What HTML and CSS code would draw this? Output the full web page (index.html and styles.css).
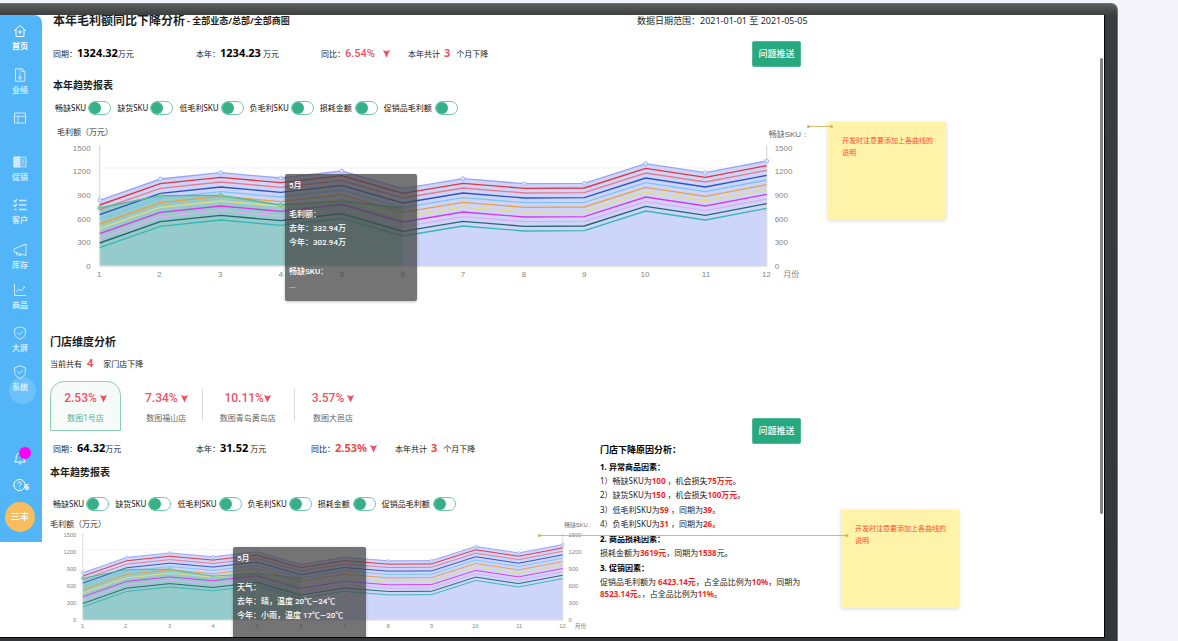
FILE: index.html
```html
<!DOCTYPE html>
<html lang="zh-CN">
<head>
<meta charset="utf-8">
<title>本年毛利额同比下降分析</title>
<link rel="stylesheet" href="styles.css">
</head>
<body>
<svg class="defs" aria-hidden="true">
  <symbol id="drop" viewBox="0 0 8 9"><path d="M0 0.5 L4 2 L8 0.5 L4 9 Z"/></symbol>
  <symbol id="shield" viewBox="0 0 14 14"><path d="M7 .8 L12.3 2.6 V7.5 C12.3 10.2 9.8 12.2 7 13.3 C4.2 12.2 1.7 10.2 1.7 7.5 V2.6 Z M4.4 6.6 L6.5 8.7 L9.8 5.2"/></symbol>
  <defs><path id="curve" d="M149 241 331 177 512 158 692 174 875 153 1058 206 1239 176 1423 191 1603 190 1787 131 1966 158 2150 123"/></defs>
</svg>

<div class="monitor">
<div class="screen">
  <aside class="sidebar">
    <nav class="nav">
      <a class="nav-item current" href="#"><svg class="icon" viewBox="0 0 14 14"><path d="M1 7 L7 1.5 L13 7 M3 5.5 V12.5 H11 V5.5"/><circle cx="7" cy="8" r="1.2"/></svg>首页</a>
      <a class="nav-item" href="#"><svg class="icon" viewBox="0 0 14 14"><path d="M2.5 .8 H9 L11.8 3.6 V13.2 H2.5 Z M9 .8 V3.6 H11.8 M6 2 V3 M7.5 3.5 V4.5 M6 5 V6 M7.5 6.5 V7.5 M6 8.5 H8 V11 H6 Z"/></svg>业绩</a>
      <a class="nav-item" href="#" aria-label="报表"><svg class="icon" viewBox="0 0 14 14"><path d="M1.5 2 H12.5 V12 H1.5 Z M1.5 5.3 H12.5 M5 5.3 V12"/></svg></a>
      <a class="nav-item" href="#"><svg class="icon" viewBox="0 0 14 14"><path d="M1 2.2 H13 V11.8 H1 Z M8.5 5 H11.5 M8.5 7 H11.5 M8.5 9 H11.5"/><path class="solid" d="M1 2 H7 V12 H1 Z"/></svg>促销</a>
      <a class="nav-item" href="#"><svg class="icon" viewBox="0 0 14 14"><path stroke-width="1.4" d="M6 2.5 H13.5 M6 7 H13.5 M6 11.5 H13.5 M.5 2.5 L2 3.8 L4 1.2 M.5 7 L2 8.3 L4 5.7 M1.5 11.5 H3.5"/></svg>客户</a>
      <a class="nav-item" href="#"><svg class="icon" viewBox="0 0 14 14"><path d="M13 1 V12.5 L1 9 V6 Z M3.5 9.8 V11.5 L7.5 12.8 V11"/></svg>库存</a>
      <a class="nav-item" href="#"><svg class="icon" viewBox="0 0 14 14"><path d="M1.5 1 V12.5 H13 M3.5 9 L6 6 L8 8 L12 4 M9.8 4 H12"/></svg>商品</a>
      <a class="nav-item" href="#"><svg class="icon"><use href="#shield"/></svg>大屏</a>
      <a class="nav-item spot" href="#"><svg class="icon"><use href="#shield"/></svg>系统</a>
    </nav>
    <div class="tools">
      <button class="tool bell" aria-label="通知"><svg class="icon" viewBox="0 0 14 14"><path d="M1.5 11 H12.5 C11 9.8 10.8 8.5 10.8 6 C10.8 3.6 9.2 2.2 7 2.2 C4.8 2.2 3.2 3.6 3.2 6 C3.2 8.5 3 9.8 1.5 11 Z M5.8 12.8 H8.2"/></svg></button>
      <button class="tool help" aria-label="帮助"><svg class="icon" viewBox="0 0 14 14"><circle cx="6.5" cy="7" r="5.6"/><path d="M4.7 5.6 C4.7 3.2 8.3 3.2 8.3 5.5 C8.3 6.8 6.5 7 6.5 8.6 M6.5 9.8 V10.6"/></svg><span class="count">6</span></button>
      <button class="avatar">三丰</button>
    </div>
  </aside>

  <main class="main">
    <section class="overview">
      <header class="head">
        <h1>本年毛利额同比下降分析</h1>
        <span class="scope">- 全部业态/总部/全部商圈</span>
        <span class="range">数据日期范围：2021-01-01 至 2021-05-05</span>
      </header>
      <div class="stats">
        <p>同期：<b>1324.32</b>万元</p>
        <p>本年：<b>1234.23</b> 万元</p>
        <p>同比：<em class="rate">6.54%</em><svg class="drop apart"><use href="#drop"/></svg></p>
        <p>本年共计<em class="months">3</em>个月下降</p>
        <button class="push">问题推送</button>
      </div>
      <h2 class="inset">本年趋势报表</h2>
      <div class="switches">
        <label>畅缺SKU<input type="checkbox" role="switch"></label>
        <label>缺货SKU<input type="checkbox" role="switch"></label>
        <label>低毛利SKU<input type="checkbox" role="switch"></label>
        <label>负毛利SKU<input type="checkbox" role="switch"></label>
        <label class="wide">损耗金额<input type="checkbox" role="switch"></label>
        <label class="wide">促销品毛利额<input type="checkbox" role="switch"></label>
      </div>
      <figure class="chart">
        <figcaption>毛利额（万元）</figcaption>
        <svg class="plot" viewBox="0 0 2280 510">
          <g id="trend">
            <path class="grid" d="M149 144H2150M149 225H2150M149 296H2150M149 367H2150"/>
            <path class="area-last" d="M149 241 331 177 512 158 692 174 875 153 1058 206 1239 176 1423 191 1603 190 1787 131 1966 158 2150 123V438H149Z"/>
            <path class="area-now" d="M149 264 331 227 512 226 692 255 875 243 1058 264V438H149Z"/>
            <path class="axis" d="M149 75V438H2150V75"/>
            <g class="lines">
              <use href="#curve" stroke="#98a4f3"/>
              <use href="#curve" y="14" stroke="#e5343f"/>
              <use href="#curve" y="28" stroke="#e87a8b"/>
              <use href="#curve" y="43" stroke="#3052c4"/>
              <use href="#curve" y="57" stroke="#7cc4f5"/>
              <use href="#curve" y="71" stroke="#ee9f3e"/>
              <use href="#curve" y="85" stroke="#e6dc7e"/>
              <use href="#curve" y="100" stroke="#dd35ea"/>
              <use href="#curve" y="114" stroke="#e4aaf3"/>
              <use href="#curve" y="128" stroke="#2b6470"/>
              <use href="#curve" y="142" stroke="#37b7b2"/>
              <path stroke="#57b894" d="M149 264 331 227 512 226 692 255 875 243 1058 264"/>
            </g>
            <g class="dots-last"><circle cx="149" cy="241" r="6"/><circle cx="331" cy="177" r="6"/><circle cx="512" cy="158" r="6"/><circle cx="692" cy="174" r="6"/><circle cx="875" cy="153" r="6"/><circle cx="1058" cy="206" r="6"/><circle cx="1239" cy="176" r="6"/><circle cx="1423" cy="191" r="6"/><circle cx="1603" cy="190" r="6"/><circle cx="1787" cy="131" r="6"/><circle cx="1966" cy="158" r="6"/><circle cx="2150" cy="123" r="6"/></g>
            <g class="dots-now"><circle cx="149" cy="264" r="6"/><circle cx="331" cy="227" r="6"/><circle cx="512" cy="226" r="6"/><circle cx="692" cy="255" r="6"/><circle cx="875" cy="243" r="6"/><circle cx="1058" cy="264" r="6"/></g>
            <g class="tick tick-end"><text x="122" y="92">1500</text><text x="122" y="163">1200</text><text x="122" y="234">900</text><text x="122" y="305">600</text><text x="122" y="376">300</text><text x="122" y="447">0</text></g>
            <g class="tick"><text x="2174" y="92">1500</text><text x="2174" y="163">1200</text><text x="2174" y="234">900</text><text x="2174" y="305">600</text><text x="2174" y="376">300</text><text x="2174" y="447">0</text><text x="2200" y="472">月份</text><text class="dark" x="2156" y="51">畅缺SKU</text><text class="dark" x="2262" y="50">:</text></g>
            <g class="tick tick-mid"><text x="148" y="471">1</text><text x="328" y="471">2</text><text x="511" y="471">3</text><text x="692" y="471">4</text><text x="875" y="471">5</text><text x="1058" y="471">6</text><text x="1239" y="471">7</text><text x="1422" y="471">8</text><text x="1603" y="471">9</text><text x="1785" y="471">10</text><text x="1968" y="471">11</text><text x="2149" y="471">12</text></g>
          </g>
        </svg>
        <div class="tip">
          <p class="tip-gap">5月</p>
          <p>毛利额：</p><p>去年：332.94万</p><p class="tip-gap">今年：302.94万</p>
          <p>畅缺SKU：</p><p>...</p>
        </div>
        <aside class="note">开发时注意要添加上各曲线的说明</aside>
        <i class="wire"></i>
      </figure>
    </section>

    <section class="stores">
      <h2 class="large">门店维度分析</h2>
      <p class="total">当前共有<em>4</em>家门店下降</p>
      <div class="columns">
        <div class="detail">
          <div class="tabs">
            <button class="tab active"><span class="pct">2.53%<svg class="drop"><use href="#drop"/></svg></span><span>数图1号店</span></button>
            <button class="tab second"><span class="pct">7.34%<svg class="drop"><use href="#drop"/></svg></span><span>数图福山店</span></button>
            <button class="tab ruled"><span class="pct tight">10.11%<svg class="drop"><use href="#drop"/></svg></span><span>数图青岛黄岛店</span></button>
            <button class="tab ruled"><span class="pct">3.57%<svg class="drop"><use href="#drop"/></svg></span><span>数图大邑店</span></button>
          </div>
          <div class="stats">
            <p>同期：<b>64.32</b>万元</p>
            <p>本年：<b>31.52</b> 万元</p>
            <p>同比：<b class="hot">2.53%</b><svg class="drop"><use href="#drop"/></svg></p>
            <p>本年共计<b class="hot months">3</b>个月下降</p>
          </div>
          <h2>本年趋势报表</h2>
          <div class="switches">
            <label>畅缺SKU<input type="checkbox" role="switch"></label>
            <label>缺货SKU<input type="checkbox" role="switch"></label>
            <label>低毛利SKU<input type="checkbox" role="switch"></label>
            <label>负毛利SKU<input type="checkbox" role="switch"></label>
            <label class="wide">损耗金额<input type="checkbox" role="switch"></label>
            <label class="wide">促销品毛利额<input type="checkbox" role="switch"></label>
          </div>
          <figure class="chart">
            <figcaption>毛利额（万元）</figcaption>
            <svg class="plot" viewBox="0 0 2280 510"><use href="#trend"/></svg>
            <div class="tip">
              <p class="tip-gap">5月</p>
              <p>天气：</p><p>去年：晴，温度 20℃—24℃</p><p class="tip-gap">今年：小雨，温度 17℃—20℃</p>
            </div>
            <aside class="note">开发时注意要添加上各曲线的说明</aside>
            <i class="wire"></i>
          </figure>
        </div>
        <div class="reasons">
          <button class="push">问题推送</button>
          <h3>门店下降原因分析：</h3>
          <h4>1. 异常商品因素：</h4>
          <p>1）畅缺SKU为<b>100</b> ，机会损失<b>75万元</b>。</p>
          <p>2）缺货SKU为<b>150</b> ，机会损失<b>100万元</b>。</p>
          <p class="apart">3）低毛利SKU为<b>59</b> ，同期为<b>39</b>。</p>
          <p>4）负毛利SKU为<b>31</b> ，同期为<b>26</b>。</p>
          <h4>2. 商品损耗因素：</h4>
          <p>损耗金额为<b>3619元</b>，同期为<b>1538</b>元。</p>
          <h4>3. 促销因素：</h4>
          <p class="wrap">促销品毛利额为 <b>6423.14元</b>，占全品比例为<b>10%</b>，同期为<b>8523.14元</b>。，占全品比例为<b>11%</b>。</p>
        </div>
      </div>
    </section>
    <i class="scroll-thumb"></i>
  </main>
</div>
</div>
</body>
</html>
```

FILE: styles.css
```css
* { box-sizing: border-box; }
body {
  margin: 0;
  padding: 3px 60px 0 0;
  height: 100vh;
  overflow: hidden;
  background: #f5f4fb;
  font: 8px/14px "Noto Sans", "Noto Sans CJK SC", sans-serif;
  color: #1d1f24;
}
h1, h2, h3, h4, p, figure { margin: 0; }
button { font: inherit; border: 0; padding: 0; background: none; cursor: pointer; }
em { font-style: normal; }
.defs { position: absolute; width: 0; height: 0; }

/* Monitor bezel */
.monitor {
  height: 100%;
  padding: 11px 12px 3px 0;
  background: linear-gradient(#5b5f5e, #3b3c3d 12px, #343536);
  border-top: 1px solid #6b7070;
  border-right: 1px solid #727778;
  border-radius: 0 7px 0 0;
}
.screen {
  display: flex;
  align-items: flex-start;
  height: 100%;
  background: #fff;
  border-right: 1px solid #050505;
  border-bottom: 1px solid #050505;
  overflow: hidden;
}

/* Sidebar */
.sidebar {
  flex: none;
  width: 42px;
  padding: 9px 2px 10px 0;
  background: #51b5f7;
  border-radius: 0 8px 0 0;
}
.nav {
  display: grid;
  grid-template-rows: 44px 43px 44px 43px 45px 40px 43px 39px 42px;
}
.nav-item {
  display: flex;
  flex-direction: column;
  align-items: center;
  gap: 1px;
  line-height: 13px;
  font-weight: 700;
  color: #cfeafd;
  text-decoration: none;
}
.nav-item.current { color: #fff; }
.icon {
  width: 14px;
  height: 14px;
  fill: none;
  stroke: currentColor;
  stroke-width: 1;
}
.icon .solid { fill: currentColor; }
.spot { position: relative; }
.spot::after {
  content: "";
  position: absolute;
  left: 9px;
  top: 12px;
  width: 27px;
  height: 27px;
  border-radius: 50%;
  background: rgba(255, 255, 255, .16);
}
.tools {
  display: flex;
  flex-direction: column;
  align-items: center;
  margin-top: 44px;
}
.tool {
  position: relative;
  height: 14px;
  margin-bottom: 13px;
  color: #fff;
}
.tool.help { margin-bottom: 10px; }
.bell::after {
  content: "";
  position: absolute;
  left: 6px;
  top: -4px;
  width: 12px;
  height: 12px;
  border-radius: 50%;
  background: #ff00f5;
}
.count {
  position: absolute;
  right: -2px;
  top: 2px;
  font-weight: 700;
}
.avatar {
  width: 30px;
  height: 30px;
  border-radius: 50%;
  background: #f8be5e;
  color: #fff;
  font-size: 9px;
  font-weight: 700;
}

/* Content */
.main {
  position: relative;
  flex: 1;
  min-width: 0;
  padding-left: 8px;
}
.scroll-thumb {
  position: absolute;
  right: 1px;
  top: 43px;
  width: 3px;
  height: 456px;
  border-radius: 2px;
  background: #858585;
}
.head {
  display: grid;
  grid-template-columns: 134px 450px auto;
  padding-left: 3px;
  line-height: 12px;
  font-size: 9px;
}
h1 { font-size: 12px; line-height: 12px; white-space: nowrap; }
.scope { font-weight: 700; }
h2 { font-size: 10px; line-height: 16px; }
.inset { padding-left: 3px; margin-top: 10px; }
.stats {
  display: grid;
  grid-template-columns: 143px 125px 87px 344px auto;
  justify-content: start;
  align-items: center;
  padding-left: 3px;
  color: #222;
}
.stats b, .stats em, .total em { line-height: 1; }
.stats b { font-size: 11px; color: #000; }
.stats .hot { color: #f3453f; }
.stats .months { margin: 0 6px 0 4px; }
.overview .stats { margin-top: 14px; }
.stats .rate { font-family: Roboto, sans-serif; font-size: 11px; font-weight: 500; color: #ec5364; }
em.months, .total em { font-size: 11px; font-weight: 700; color: #ec5364; }
.drop { width: 7px; height: 9px; margin-left: 3px; fill: #ec5364; vertical-align: -1px; }
.drop.apart { margin-left: 8px; }
.push {
  width: 49px;
  height: 26px;
  border: 1px solid #4fb997;
  border-radius: 2px;
  background: #26a97f;
  color: #fff;
  font-size: 9px;
  font-weight: 500;
}

.switches { display: flex; gap: 6px; padding-left: 5px; margin-top: 8px; color: #111; }
.switches label { display: flex; align-items: center; gap: 2px; white-space: nowrap; }
.switches .wide { gap: 3px; }
.switches input {
  appearance: none;
  width: 23px;
  height: 14px;
  margin: 0;
  border: 1px solid #6fc7a9;
  border-radius: 7px;
  background: #fff;
}
.switches input::before {
  content: "";
  display: block;
  width: 12px;
  height: 12px;
  border-radius: 50%;
  background: #37b08a;
}
.switches input:checked::before { margin-left: auto; }

/* Trend charts */
.chart { position: relative; display: grid; justify-items: start; margin-top: 5px; }
.chart figcaption, .plot { grid-area: 1 / 1; }
.chart figcaption { padding: 5px 0 0 7px; color: #333; }
.plot { width: 100%; max-width: 760px; aspect-ratio: 2280 / 510; }
.grid { fill: none; stroke: #8088a0; stroke-opacity: .12; stroke-width: 3; }
.axis { fill: none; stroke: #dcdcdc; stroke-width: 4; }
.area-last { fill: #cdd5fa; }
.area-now { fill: #5fc19d; fill-opacity: .5; }
.lines { fill: none; stroke-width: 4; }
.dots-last { fill: #dde2fc; stroke: #98a4f3; stroke-width: 2; }
.dots-now { fill: #8bd0b4; stroke: #57b894; stroke-width: 2; }
.tick { font: 24px "Liberation Sans", "Noto Sans CJK SC", sans-serif; fill: #858585; }
.tick .dark { fill: #666; }
.tick-end { text-anchor: end; }
.tick-mid { text-anchor: middle; }
.tip {
  position: absolute;
  left: 235px;
  top: 54px;
  width: 132px;
  padding: 5px 4px 8px;
  border-radius: 2px;
  background: rgba(68, 68, 68, .74);
  box-shadow: 0 1px 3px rgba(0, 0, 0, .25);
  color: #fff;
  font: 500 8px/14px Roboto, "Noto Sans CJK SC", sans-serif;
}
.tip-gap { margin-bottom: 15px; }
.note {
  position: absolute;
  left: 778px;
  top: 2px;
  width: 118px;
  height: 98px;
  padding: 13px 10px 13px 14px;
  background: #fef3a8;
  box-shadow: 0 1px 4px rgba(0, 0, 0, .16);
  color: #ff4b33;
  font-size: 7px;
  line-height: 12px;
}
.wire {
  position: absolute;
  left: 757px;
  top: 6px;
  width: 26px;
  height: 1px;
  background: #cabd70;
}
.wire::before, .wire::after {
  content: "";
  position: absolute;
  top: -1px;
  width: 3px;
  height: 3px;
  border-radius: 50%;
  background: #c4b76c;
}
.wire::before { left: 0; }
.wire::after { right: 0; }

/* Store analysis */
.stores { margin-top: 44px; }
.large { font-size: 11px; }
.total { margin-top: 7px; }
.total em { margin: 0 10px 0 5px; }
.columns {
  display: grid;
  grid-template-columns: 550px 1fr;
  align-items: start;
  margin-top: 10px;
}
.tabs { display: flex; }
.tab {
  display: flex;
  flex-direction: column;
  align-items: center;
  justify-content: center;
  gap: 6px;
  height: 50px;
  padding: 4px 18px 0;
  color: #666;
  white-space: nowrap;
  position: relative;
}
.tab.active {
  width: 71px;
  padding: 4px 0 0;
  border: 1px solid #8bd0b5;
  border-radius: 14px 14px 0 0;
  background: #f6fbf9;
  color: #5fae8f;
}
.tab.second { padding: 4px 14px 0 24px; }
.tab.ruled::before {
  content: "";
  position: absolute;
  left: 0;
  top: 8px;
  width: 1px;
  height: 32px;
  background: #dadada;
}
.pct { font: 500 12px/14px Roboto, sans-serif; color: #ec5364; }
.tight .drop { margin-left: 0; }
.stores .stats { grid-template-columns: 143px 115px 84px auto; margin-top: 10px; line-height: 16px; }
.detail h2 { margin-top: 7px; }
.stores .switches { padding-left: 3px; margin-top: 17px; }
.stores .chart { margin-top: 4px; }
.stores figcaption { padding: 2px 0 0; }
.stores .plot { max-width: 547px; margin-left: -3px; }
.stores .tip { left: 183px; top: 32px; width: 133px; height: 110px; }
.stores .note { left: 791px; top: -5px; }
.stores .wire { left: 488px; top: 20px; width: 310px; }

.reasons { padding-top: 37px; color: #222; }
.reasons .push { display: block; margin-left: 152px; }
.reasons h3 { font-size: 9px; line-height: 12px; color: #000; }
.reasons h4 { margin-top: 1px; font-size: 8px; color: #000; }
.reasons h3 + h4 { margin-top: 4px; }
.reasons .apart { margin-top: 1px; }
.reasons b { color: #fb1f1f; }
.reasons .wrap { max-width: 208px; padding-top: 1px; line-height: 12px; }
```
